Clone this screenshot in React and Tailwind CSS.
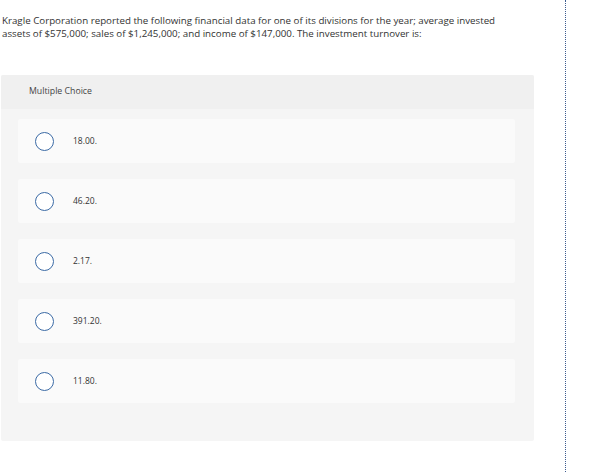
import React from "react";

const options = ["18.00.", "46.20.", "2.17.", "391.20.", "11.80."];

export default function App() {
  return (
    <div className="flex w-[613px] h-[472px] bg-white text-[#333]" style={{ fontFamily: "'Open Sans', Lato, sans-serif" }}>
      <div className="w-[565px] shrink-0">
        <p className="pl-[2px] pt-[14px] text-[9.75px] leading-[13px] text-[#333] whitespace-nowrap">
          Kragle Corporation reported the following financial data for one of its divisions for the year; average invested
          <br />
          assets of $575,000; sales of $1,245,000; and income of $147,000. The investment turnover is:
        </p>
        <div className="ml-[1px] mt-[35px] w-[533px] bg-[#f5f5f5] rounded-[2px] pb-[38px]">
          <div className="h-[34px] bg-[#f0f0f0] flex items-center pl-[28px] text-[8.75px] text-[#444] rounded-t-[2px]">
            Multiple Choice
          </div>
          <div className="flex flex-col gap-[16px] pt-[10px] pl-[17px] pr-[19px]">
            {options.map((o) => (
              <div key={o} className="h-[44px] bg-[#fafafa] rounded-[2px] flex items-center">
                <div className="ml-[17px] w-[19px] h-[19px] rounded-full border-[1.5px] border-[#3b6aa5] bg-white"></div>
                <span className="ml-[19px] text-[8.5px] text-[#333]">{o}</span>
              </div>
            ))}
          </div>
        </div>
      </div>
      <div className="h-full border-l border-dotted border-[#3d5c8f]"></div>
    </div>
  );
}
